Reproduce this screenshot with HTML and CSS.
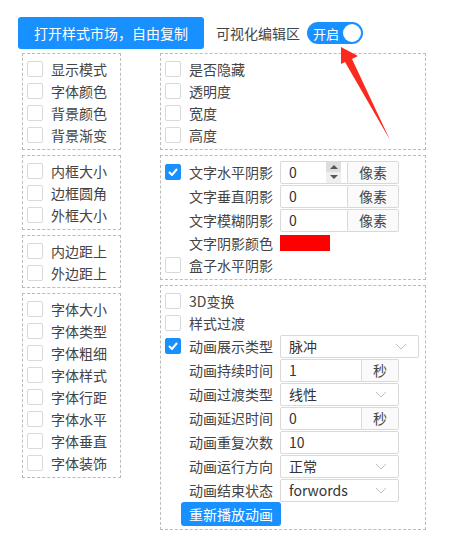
FILE: index.html
```html
<!DOCTYPE html>
<html lang="zh-CN">
<head>
<meta charset="UTF-8">
<title>样式编辑</title>
<link rel="stylesheet" href="styles.css">
</head>
<body>
<div class="page">
    <div class="top">
        <button class="btn btn-main">打开样式市场，自由复制</button>
        <span class="top-label">可视化编辑区</span>
        <span class="switch"><span class="switch-text">开启</span><span class="knob"></span></span>
    </div>

    <div class="panels">
        <div class="col col-left">
            <div class="box">
                <div class="row"><span class="cb"></span>显示模式</div>
                <div class="row"><span class="cb"></span>字体颜色</div>
                <div class="row"><span class="cb"></span>背景颜色</div>
                <div class="row"><span class="cb"></span>背景渐变</div>
            </div>
            <div class="box">
                <div class="row"><span class="cb"></span>内框大小</div>
                <div class="row"><span class="cb"></span>边框圆角</div>
                <div class="row"><span class="cb"></span>外框大小</div>
            </div>
            <div class="box">
                <div class="row"><span class="cb"></span>内边距上</div>
                <div class="row"><span class="cb"></span>外边距上</div>
            </div>
            <div class="box">
                <div class="row"><span class="cb"></span>字体大小</div>
                <div class="row"><span class="cb"></span>字体类型</div>
                <div class="row"><span class="cb"></span>字体粗细</div>
                <div class="row"><span class="cb"></span>字体样式</div>
                <div class="row"><span class="cb"></span>字体行距</div>
                <div class="row"><span class="cb"></span>字体水平</div>
                <div class="row"><span class="cb"></span>字体垂直</div>
                <div class="row"><span class="cb"></span>字体装饰</div>
            </div>
        </div>

        <div class="col col-right">
            <div class="box">
                <div class="row"><span class="cb"></span>是否隐藏</div>
                <div class="row"><span class="cb"></span>透明度</div>
                <div class="row"><span class="cb"></span>宽度</div>
                <div class="row"><span class="cb"></span>高度</div>
            </div>
            <div class="box">
                <div class="frow has-cb">
                    <span class="cb checked"><svg width="10" height="8" viewBox="0 0 10 8"><path d="M1 4 L4 7 L9 1" fill="none" stroke="#fff" stroke-width="2"/></svg></span>
                    <span class="flabel">文字水平阴影</span>
                    <span class="group">
                        <span class="field w68">0<span class="spin"><i class="up"></i><i class="down"></i></span></span>
                        <span class="addon w51">像素</span>
                    </span>
                </div>
                <div class="frow">
                    <span class="flabel">文字垂直阴影</span>
                    <span class="group"><span class="field w68">0</span><span class="addon w51">像素</span></span>
                </div>
                <div class="frow">
                    <span class="flabel">文字模糊阴影</span>
                    <span class="group"><span class="field w68">0</span><span class="addon w51">像素</span></span>
                </div>
                <div class="frow short">
                    <span class="flabel">文字阴影颜色</span>
                    <span class="swatch"></span>
                </div>
                <div class="row"><span class="cb"></span>盒子水平阴影</div>
            </div>
            <div class="box">
                <div class="row"><span class="cb"></span>3D变换</div>
                <div class="row"><span class="cb"></span>样式过渡</div>
                <div class="frow has-cb">
                    <span class="cb checked"><svg width="10" height="8" viewBox="0 0 10 8"><path d="M1 4 L4 7 L9 1" fill="none" stroke="#fff" stroke-width="2"/></svg></span>
                    <span class="flabel">动画展示类型</span>
                    <span class="select w139">脉冲<svg class="arrow" width="12" height="7" viewBox="0 0 12 7"><path d="M1 1 L6 6 L11 1" fill="none" stroke="#bfbfbf"/></svg></span>
                </div>
                <div class="frow">
                    <span class="flabel">动画持续时间</span>
                    <span class="group"><span class="field w82">1</span><span class="addon w37">秒</span></span>
                </div>
                <div class="frow">
                    <span class="flabel">动画过渡类型</span>
                    <span class="select w119">线性<svg class="arrow" width="12" height="7" viewBox="0 0 12 7"><path d="M1 1 L6 6 L11 1" fill="none" stroke="#bfbfbf"/></svg></span>
                </div>
                <div class="frow">
                    <span class="flabel">动画延迟时间</span>
                    <span class="group"><span class="field w82">0</span><span class="addon w37">秒</span></span>
                </div>
                <div class="frow">
                    <span class="flabel">动画重复次数</span>
                    <span class="field solo w119">10</span>
                </div>
                <div class="frow">
                    <span class="flabel">动画运行方向</span>
                    <span class="select w119">正常<svg class="arrow" width="12" height="7" viewBox="0 0 12 7"><path d="M1 1 L6 6 L11 1" fill="none" stroke="#bfbfbf"/></svg></span>
                </div>
                <div class="frow">
                    <span class="flabel">动画结束状态</span>
                    <span class="select w119">forwords<svg class="arrow" width="12" height="7" viewBox="0 0 12 7"><path d="M1 1 L6 6 L11 1" fill="none" stroke="#bfbfbf"/></svg></span>
                </div>
                <div class="brow"><button class="btn btn-small">重新播放动画</button></div>
            </div>
        </div>
    </div>

    <!-- 标注箭头 -->
    <svg class="mark" width="467" height="555" viewBox="0 0 467 555">
        <polygon points="341,47 358,56 352,59 390,140 345,62 341,64" fill="#fa2a1e"/>
    </svg>
</div>
</body>
</html>
```

FILE: styles.css
```css
*{margin:0;padding:0;box-sizing:border-box}
body{font-family:"Noto Sans CJK SC","Liberation Sans",sans-serif;font-size:14px;color:#444;background:#fff}
.page{position:relative;width:467px;height:555px}

.top {display: flex; align-items: center; padding: 17px 0 0 18px; height: 49px;}
.btn {border: 0; border-radius: 3px; background-color: #1890ff; color: #fff; font-family: inherit; font-size: 14px; line-height: 1;}
.btn-main {height: 32px; padding: 0 16px;}
.top-label {margin-left: 12px; line-height: 22px;}
.switch {display: inline-flex; align-items: center; justify-content: space-between; margin-left: 7px; width: 56px; height: 22px; border-radius: 11px; background-color: #1890ff; padding: 0 2px 0 6px;}
.switch-text {color: #fff; font-size: 13px; line-height: 1;}
.knob {width: 18px; height: 18px; border-radius: 50%; background: #fff;}

.panels {display: flex; gap: 39px; padding: 4px 0 0 22px;}
.col-left {width: 99px;}
.col-right {width: 266px;}
.box {border: 1px dashed #bbb; padding: 4px 4px 3px; margin-bottom: 5px;}

.row {display: flex; align-items: center; height: 22px; line-height: 1;}
.cb {display: inline-flex; align-items: center; justify-content: center; width: 16px; height: 16px; border: 1px solid #d9d9d9; border-radius: 2px; background: #fff; margin-right: 8px; flex: none;}
.cb.checked {background-color: #1890ff; border-color: #1890ff;}

.frow {display: flex; align-items: center; height: 24px; padding-left: 24px; line-height: 1;}
.frow.has-cb {padding-left: 0;}
.frow.short {height: 22px;}
.flabel {width: 91px; flex: none;}

.group {display: flex; height: 23px;}
.field, .select {display: flex; align-items: center; height: 23px; border: 1px solid #d9d9d9; padding: 0 8px; color: #333; background: #fff; position: relative;}
.group .field {border-radius: 2px 0 0 2px;}
.field.solo, .select {border-radius: 2px;}
.addon {display: flex; align-items: center; justify-content: center; height: 23px; border: 1px solid #d9d9d9; border-left: 0; border-radius: 0 2px 2px 0; background: #fafafa; color: #444;}
.select {justify-content: space-between;}
.select .arrow {margin-right: 3px;}

.w68 {width: 68px;}
.w51 {width: 51px;}
.w82 {width: 82px;}
.w37 {width: 37px;}
.w119 {width: 119px;}
.w139 {width: 139px;}

/* 数字输入框的上下按钮 */
.spin {position: absolute; right: 6px; top: 0; width: 15px; height: 21px; display: flex; flex-direction: column;}
.spin i {flex: 1; display: flex; align-items: center; justify-content: center;}
.spin .up {background: #dedede;}
.spin .down {background: #efefef;}
.spin .up::after {content: ""; border-left: 4px solid transparent; border-right: 4px solid transparent; border-bottom: 4px solid #555;}
.spin .down::after {content: ""; border-left: 4px solid transparent; border-right: 4px solid transparent; border-top: 4px solid #555;}

.swatch {width: 50px; height: 16px; background: #ff0000;}

.brow {display: flex; align-items: center; height: 24px; padding-left: 16px;}
.btn-small {height: 24px; padding: 0 8px;}

.mark {position: absolute; left: 0; top: 0; pointer-events: none;}
```
